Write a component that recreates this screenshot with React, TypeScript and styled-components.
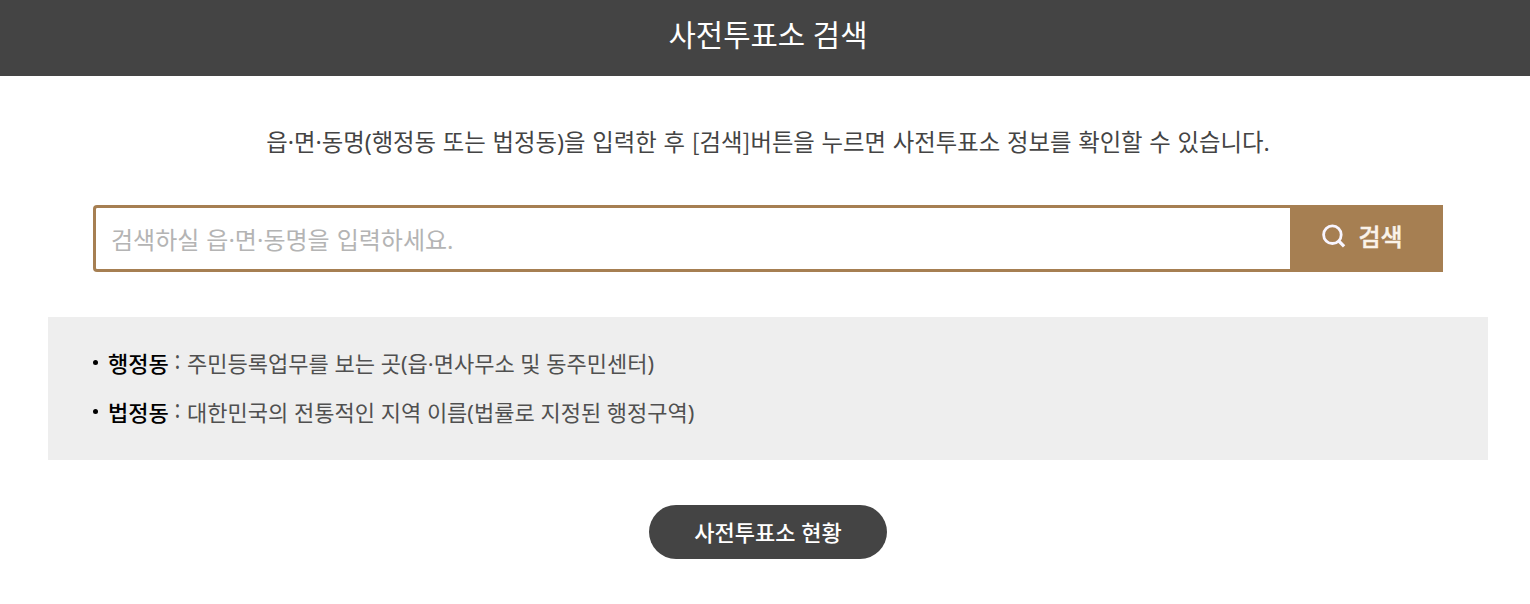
import React from "react";
import styled, { createGlobalStyle } from "styled-components";

const Global = createGlobalStyle`
  * { box-sizing: border-box; }
  body { margin: 0; background: #fff; font-family: "Noto Sans", "Noto Sans CJK KR", sans-serif; overflow: hidden; }
`;
const Page = styled.div`
  width: 1530px;
  height: 604px;
`;
const Header = styled.header`
  height: 76px;
  background: #444;
  display: flex;
  justify-content: center;
  padding: 13px 0 0 6px;
`;
const Title = styled.h1`
  margin: 0;
  color: #fff;
  font-size: 29.7px;
  line-height: 44px;
  font-weight: 400;
  white-space: nowrap;
`;
const Main = styled.main`
  width: 1440px;
  margin-left: 48px;
  display: flex;
  flex-direction: column;
  align-items: center;
`;
const Guide = styled.p`
  margin: 48px 0 0;
  height: 36px;
  line-height: 36px;
  font-size: 23.35px;
  word-spacing: 0.7px;
  color: #444;
  white-space: nowrap;
`;
const Bracket = styled.span`
  font-family: "Noto Sans CJK KR", sans-serif;
  line-height: 1;
`;
const SearchForm = styled.form`
  margin: 45px 0 0;
  width: 1350px;
  height: 67px;
  display: flex;
`;
const SearchInput = styled.input`
  flex: 1;
  min-width: 0;
  height: 67px;
  border: 3px solid #a67f52;
  border-right: 0;
  border-radius: 4px 0 0 4px;
  padding: 2px 15px 0;
  font: 400 24px "Noto Sans", "Noto Sans CJK KR", sans-serif;
  word-spacing: 0.8px;
  outline: none;
  &::placeholder { color: #b4b4b4; opacity: 1; }
`;
const SearchButton = styled.button`
  width: 153px;
  border: 0;
  padding: 0 10px 6px 0;
  background: #a67f52;
  color: #faf3ea;
  display: flex;
  align-items: center;
  justify-content: center;
  gap: 12px;
  font: 500 24px "Noto Sans CJK KR", sans-serif;
  -webkit-text-stroke: 0.4px #faf3ea;
`;
const Notes = styled.ul`
  list-style: none;
  margin: 45px 0 0;
  width: 1440px;
  height: 143px;
  padding: 21px 45px;
  background: #eee;
`;
const Note = styled.li`
  display: flex;
  align-items: center;
  height: 49px;
  font-size: 22px;
  color: #505050;
  white-space: pre;
  &::before {
    content: "";
    width: 5px;
    height: 5px;
    border-radius: 50%;
    background: #000;
    margin-right: 10px;
  }
`;
const Term = styled.strong`
  font-weight: 500;
  color: #000;
  padding-bottom: 2px;
`;
const Description = styled.span`
  padding-bottom: 2px;
`;
const Colon = styled.span`
  display: inline-block;
  padding-bottom: 2px;
  margin-right: 1px;
  transform: translateY(-3px) scaleY(1.12);
`;
const StatusButton = styled.button`
  margin-top: 45px;
  width: 238px;
  height: 54px;
  border: 0;
  border-radius: 27px;
  background: #444;
  color: #fff;
  font: 500 22px "Noto Sans", "Noto Sans CJK KR", sans-serif;
  padding: 0 0 3px;
`;

export default function App() {
  return (
    <Page>
      <Global />
      <Header><Title>사전투표소 검색</Title></Header>
      <Main>
        <Guide>읍·면·동명(행정동 또는 법정동)을 입력한 후 <Bracket>[</Bracket>검색<Bracket>]</Bracket>버튼을 누르면 사전투표소 정보를 확인할 수 있습니다.</Guide>
        <SearchForm onSubmit={(e) => e.preventDefault()}>
          <SearchInput placeholder="검색하실 읍·면·동명을 입력하세요." />
          <SearchButton type="submit">
            <svg width="26" height="26" viewBox="0 0 26 26" fill="none" stroke="#f8f5ff" strokeWidth="2.8">
              <circle cx="12.4" cy="11.7" r="8.8" />
              <path d="M18.4 17.7 L24.1 23.4" strokeWidth="3.3" />
            </svg>
            <span>검색</span>
          </SearchButton>
        </SearchForm>
        <Notes>
          <Note><Term>행정동</Term><Colon> : </Colon><Description>주민등록업무를 보는 곳(읍·면사무소 및 동주민센터)</Description></Note>
          <Note><Term>법정동</Term><Colon> : </Colon><Description>대한민국의 전통적인 지역 이름(법률로 지정된 행정구역)</Description></Note>
        </Notes>
        <StatusButton type="button">사전투표소 현황</StatusButton>
      </Main>
    </Page>
  );
}
